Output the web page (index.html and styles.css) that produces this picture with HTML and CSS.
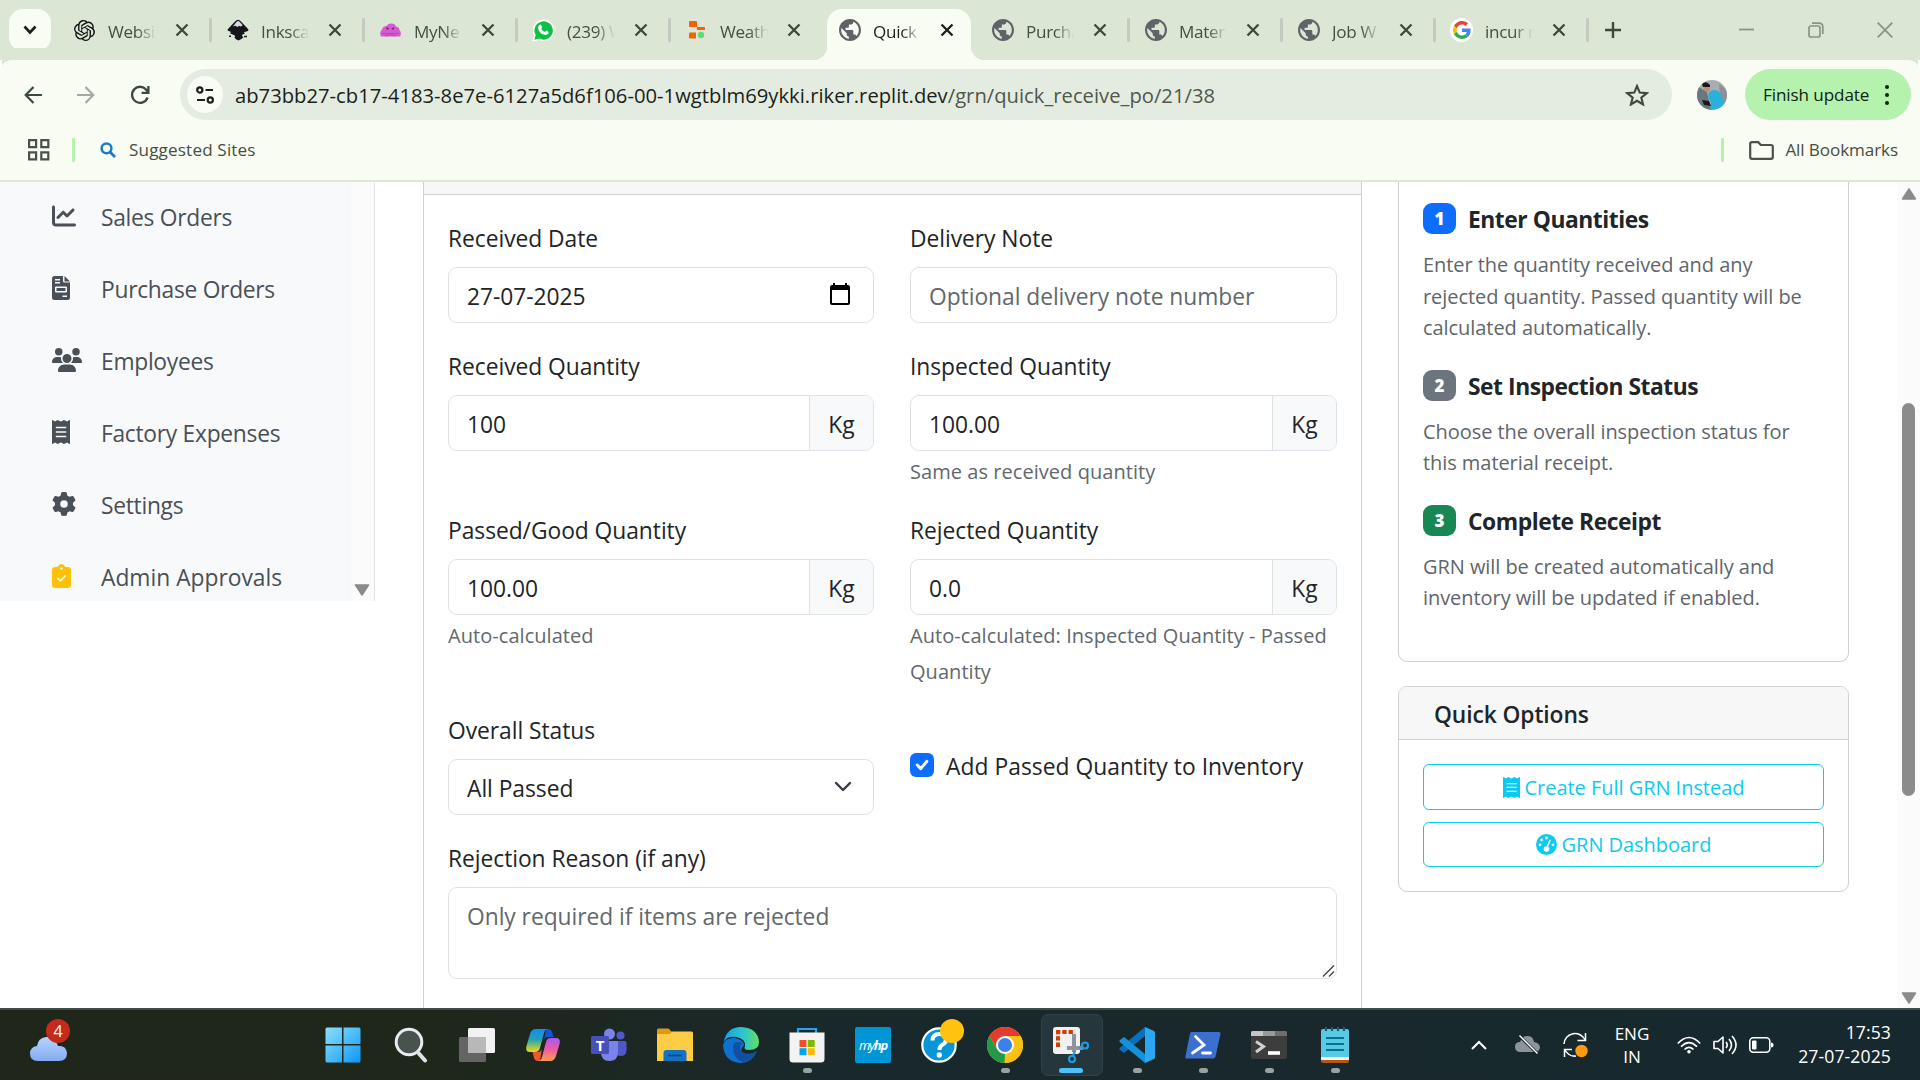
FILE: index.html
```html
<!DOCTYPE html>
<html lang="en">
<head>
<meta charset="utf-8">
<title>Quick Receive</title>
<link rel="stylesheet" href="styles.css">
</head>
<body>
<svg class="defs" width="0" height="0" aria-hidden="true">
  <symbol id="x" viewBox="0 0 14 14"><path d="M1.500 1.500l11 11M12.500 1.500l-11 11" stroke="currentColor" stroke-width="2.300" fill="none"/></symbol>
  <symbol id="globe" viewBox="2 2 20 20"><path fill="#5f6368" d="M12 2C6.480 2 2 6.480 2 12s4.480 10 10 10 10-4.480 10-10S17.520 2 12 2zm-1 17.930c-3.950-.49-7-3.850-7-7.930 0-.62.08-1.210.21-1.790L9 15v1c0 1.100.9 2 2 2v1.930zm6.900-2.540c-.26-.81-1-1.390-1.900-1.390h-1v-3c0-.55-.45-1-1-1H8v-2h2c.55 0 1-.45 1-1V7h2c1.100 0 2-.9 2-2v-.41c2.930 1.190 5 4.060 5 7.410 0 2.080-.8 3.970-2.100 5.390z"/></symbol>
  <symbol id="receipt" viewBox="0 0 18 24"><path fill="currentColor" fill-rule="evenodd" d="M0 .7Q0-.3 1 .3L3 1.600 5 .2Q5.500 0 6 .2L9 1.600 11.500.2Q12 0 12.500.2L15 1.600 17 .3Q18-.3 18 .7V23.300Q18 24.300 17 23.700L15 22.400 12.500 23.800Q12 24 11.500 23.800L9 22.400 6 23.800Q5.500 24 5 23.800L3 22.400 1 23.700Q0 24.300 0 23.300ZM3.800 6.800v1.500h10.500V6.800ZM3.800 11.200v1.500h10.500v-1.500ZM3.800 15.700v1.500h10.500v-1.500Z"/></symbol>
</svg>

<header class="tabstrip">
  <button class="tab-search"><svg width="14" height="10" viewBox="0 0 14 10"><path d="M1.500 1.500L7 7.500l5.500-6" fill="none" stroke="#1b1f18" stroke-width="2.600"/></svg></button>
  <div class="tabs">
    <div class="tab"><span class="fav"><svg width="21" height="21" viewBox="0 0 24 24"><path fill="#111" d="M22.2819 9.8211a5.9847 5.9847 0 0 0-.5157-4.9108 6.0462 6.0462 0 0 0-6.5098-2.9A6.0651 6.0651 0 0 0 4.9807 4.1818a5.9847 5.9847 0 0 0-3.9977 2.9 6.0462 6.0462 0 0 0 .7427 7.0966 5.98 5.98 0 0 0 .511 4.9107 6.051 6.051 0 0 0 6.5146 2.9001A5.9847 5.9847 0 0 0 13.2599 24a6.0557 6.0557 0 0 0 5.7718-4.2058 5.9894 5.9894 0 0 0 3.9977-2.9001 6.0557 6.0557 0 0 0-.7475-7.0729zm-9.022 12.6081a4.4755 4.4755 0 0 1-2.8764-1.0408l.1419-.0804 4.7783-2.7582a.7948.7948 0 0 0 .3927-.6813v-6.7369l2.02 1.1686a.071.071 0 0 1 .038.052v5.5826a4.504 4.504 0 0 1-4.4945 4.4944zm-9.6607-4.1254a4.4708 4.4708 0 0 1-.5346-3.0137l.142.0852 4.783 2.7582a.7712.7712 0 0 0 .7806 0l5.8428-3.3685v2.3324a.0804.0804 0 0 1-.0332.0615L9.74 19.9502a4.4992 4.4992 0 0 1-6.1408-1.6464zM2.3408 7.8956a4.485 4.485 0 0 1 2.3655-1.9728V11.6a.7664.7664 0 0 0 .3879.6765l5.8144 3.3543-2.0201 1.1685a.0757.0757 0 0 1-.071 0l-4.8303-2.7865A4.504 4.504 0 0 1 2.3408 7.872zm16.5963 3.8558L13.1038 8.364 15.1192 7.2a.0757.0757 0 0 1 .071 0l4.8303 2.7913a4.4944 4.4944 0 0 1-.6765 8.1042v-5.6772a.79.79 0 0 0-.407-.667zm2.0107-3.0231l-.142-.0852-4.7735-2.7818a.7759.7759 0 0 0-.7854 0L9.409 9.2297V6.8974a.0662.0662 0 0 1 .0284-.0615l4.8303-2.7866a4.4992 4.4992 0 0 1 6.6802 4.66zM8.3065 12.863l-2.02-1.1638a.0804.0804 0 0 1-.038-.0567V6.0742a4.4992 4.4992 0 0 1 7.3757-3.4537l-.142.0805L8.704 5.459a.7948.7948 0 0 0-.3927.6813zm1.0976-2.3654l2.602-1.4998 2.6069 1.4998v2.9994l-2.5974 1.4997-2.6067-1.4997Z"/></svg></span><span class="tab-title">Websi</span><svg class="close"><use href="#x"/></svg></div>
    <div class="tab"><span class="fav"><svg width="22" height="22" viewBox="0 0 22 22"><path d="M11 .8Q12.500.8 14 2.500L21 10q1.200 1.600-.8 2.300l-3.400.9q1.400.8.6 1.600l-2.200.9q-.6 2 1.300 2.500-1 1.500-5 3.300-3-1-4.200-3.200 1.500-.8 0-2L3.400 14.500q-.7-1 .8-1.600L1.600 12Q-.1 11.300 1 10L8 2.500Q9.500.8 11 .8Z" fill="#15161c"/><path d="M11 2q1 0 2 1.200l2.700 3-2.200 1.300-1.500-.8-1.300 1.300L8.300 6.800 6 7.500l3-4Q10 2 11 2Z" fill="#d9dbe6"/><path d="M17 17.500h3M2 17.200h2" stroke="#222" stroke-width="1.500"/></svg></span><span class="tab-title">Inksca</span><svg class="close"><use href="#x"/></svg></div>
    <div class="tab"><span class="fav"><svg width="21" height="14" viewBox="0 0 21 14"><path d="M1 13.500Q-1 9 2 6.500 3 3 6.500 3 8 0 11.500.5 15 .5 16 3.500q3.500.5 3.500 3.500 2.500 3 .5 6.500Z" fill="#d65bd0"/><path d="M2 10.500h17M5 13q5-3 11 0" stroke="#bf3fc0" stroke-width="1" fill="none"/><path d="M6.500 5l2 1.200M14 5l-2 1.200" stroke="#702070" stroke-width="1.500"/></svg></span><span class="tab-title">MyNe</span><svg class="close"><use href="#x"/></svg></div>
    <div class="tab"><span class="fav"><svg width="23" height="23" viewBox="0 0 23 23"><path d="M.5 22.500l1.700-6A10.800 10.800 0 1 1 6.800 21Z" fill="#fff"/><path d="M2.400 20.800l1.300-4.700a9.200 9.200 0 1 1 3.500 3.400Z" fill="#0cc143"/><path d="M7.500 6q1.200-1 1.900.5l.8 1.900-.9 1.300q1.200 2.300 3.600 3.300l1.300-1.400 2.300 1.200q.7 3-2.900 3.100-6.500-.7-7.600-7.200 0-1.700 1.500-2.700Z" fill="#fff"/></svg></span><span class="tab-title">(239) W</span><svg class="close"><use href="#x"/></svg></div>
    <div class="tab no-sep"><span class="fav"><svg width="16" height="18" viewBox="0 0 16 18"><path fill="#f26207" d="M1 0h6q1 0 1 1v5H1Q0 6 0 5V1Q0 0 1 0ZM8 6h7q1 0 1 1v2H8ZM1 11.500h6V17.500H1q-1 0-1-1v-4q0-1 1-1Z"/><circle cx="12" cy="14" r="3.200" fill="#5fdc78"/></svg></span><span class="tab-title">Weath</span><svg class="close"><use href="#x"/></svg></div>
    <div class="tab active"><span class="fav"><svg width="22" height="22"><use href="#globe"/></svg></span><span class="tab-title">Quick</span><svg class="close"><use href="#x"/></svg></div>
    <div class="tab"><span class="fav"><svg width="22" height="22"><use href="#globe"/></svg></span><span class="tab-title">Purcha</span><svg class="close"><use href="#x"/></svg></div>
    <div class="tab"><span class="fav"><svg width="22" height="22"><use href="#globe"/></svg></span><span class="tab-title">Mater</span><svg class="close"><use href="#x"/></svg></div>
    <div class="tab"><span class="fav"><svg width="22" height="22"><use href="#globe"/></svg></span><span class="tab-title">Job W</span><svg class="close"><use href="#x"/></svg></div>
    <div class="tab"><span class="fav google"><svg width="18" height="18" viewBox="0 0 48 48"><path fill="#EA4335" d="M24 9.500c3.540 0 6.710 1.220 9.210 3.600l6.850-6.850C35.900 2.380 30.470 0 24 0 14.620 0 6.510 5.380 2.560 13.220l7.980 6.190C12.430 13.720 17.740 9.500 24 9.500z"/><path fill="#4285F4" d="M46.980 24.550c0-1.570-.15-3.090-.38-4.550H24v9.020h12.940c-.58 2.960-2.260 5.480-4.780 7.180l7.730 6c4.510-4.180 7.090-10.360 7.090-17.650z"/><path fill="#FBBC05" d="M10.530 28.590c-.48-1.450-.76-2.990-.76-4.590s.27-3.140.76-4.590l-7.980-6.190C.92 16.460 0 20.120 0 24c0 3.880.92 7.540 2.560 10.780l7.970-6.190z"/><path fill="#34A853" d="M24 48c6.480 0 11.930-2.130 15.890-5.810l-7.730-6c-2.150 1.450-4.920 2.300-8.160 2.300-6.260 0-11.570-4.220-13.470-9.910l-7.980 6.190C6.510 42.620 14.620 48 24 48z"/></svg></span><span class="tab-title">incur m</span><svg class="close"><use href="#x"/></svg></div>
  </div>
  <button class="new-tab"><svg width="16" height="16" viewBox="0 0 16 16"><path d="M8 0v16M0 8h16" stroke="#3c4a38" stroke-width="2.400"/></svg></button>
  <div class="window-controls">
    <svg width="16" height="16" viewBox="0 0 16 16"><path d="M0 7.500h15" stroke="#8b9485" stroke-width="1.800"/></svg>
    <svg width="16" height="16" viewBox="0 0 16 16" fill="none" stroke="#8b9485" stroke-width="1.700"><rect x="1" y="4" width="11" height="11" rx="2"/><path d="M4 1.200h7q3.800 0 3.800 3.800v7"/></svg>
    <svg width="16" height="16" viewBox="0 0 16 16"><path d="M.7.7l14.600 14.600M15.300.7L.7 15.300" stroke="#8b9485" stroke-width="1.800"/></svg>
  </div>
</header>

<div class="toolbar">
  <nav class="nav-buttons">
    <svg width="18" height="18" viewBox="0 0 18 18" fill="none" stroke="#3c4a38" stroke-width="2.200"><path d="M9.500 1L1.700 9l7.800 8M1.700 9H18"/></svg>
    <svg width="18" height="18" viewBox="0 0 18 18" fill="none" stroke="#a3aba0" stroke-width="2.200"><path d="M8.500 1l7.800 8-7.800 8M16.300 9H0"/></svg>
    <svg width="20" height="20" viewBox="0 0 20 20" fill="none" stroke="#3c4a38" stroke-width="2.300"><path d="M17.600 12.500A8 8 0 1 1 16.500 5l1.500 2M18.400 1v6.800H11.600"/></svg>
  </nav>
  <div class="omnibox">
    <span class="site-info"><svg width="18" height="18" viewBox="0 0 18 18" fill="none" stroke="#1b1f18" stroke-width="2.200"><circle cx="3.800" cy="4" r="2.600"/><path d="M9.500 4H17M1 14h8"/><circle cx="14.300" cy="14" r="2.600"/></svg></span>
    <span class="url"><span class="host">ab73bb27-cb17-4183-8e7e-6127a5d6f106-00-1wgtblm69ykki.riker.replit.dev</span><span class="path">/grn/quick_receive_po/21/38</span></span>
    <svg class="star" width="24" height="22" viewBox="0 0 24 22"><path d="M12 2l2.700 6.600 7.100.5-5.500 4.500 1.800 6.900L12 16.800l-6.100 3.700 1.800-6.900L2.200 9.100l7.100-.5Z" fill="none" stroke="#3f4a3c" stroke-width="2.100"/></svg>
  </div>
  <svg class="avatar" width="30" height="30" viewBox="0 0 30 30"><defs><clipPath id="av"><circle cx="15" cy="15" r="15"/></clipPath></defs><g clip-path="url(#av)"><path fill="#a9adb2" d="M0 0h30v30H0z"/><path fill="#6d757d" d="M0 6l10 6 4 18H0z"/><path fill="#8d9196" d="M22 4l8 6v20h-6z"/><path fill="#2ab1d9" d="M12 12q7-5 12 2l4 11-7 5h-8l1-8q-4-4-2-10Z"/><path fill="#c58a68" d="M6 5l6-1 1 6-3 2-3-3z"/><path fill="#17191d" d="M5 4q4-4 8 1v2L6 7zM5 20l7 1 2 5-7-1z"/></g></svg>
  <button class="update"><span>Finish update</span><i></i></button>
</div>

<div class="bookmarks">
  <svg class="apps" width="22" height="22" viewBox="0 0 22 22" fill="none" stroke="#4a5146" stroke-width="2.200"><path d="M1.100 1.100h7v7h-7zM13.300 1.100h7v7h-7zM1.100 13.300h7v7h-7zM13.300 13.300h7v7h-7z"/></svg>
  <i class="bar"></i>
  <svg class="lens" width="16" height="16" viewBox="0 0 16 16" fill="none" stroke="#1f7bc9"><circle cx="6.500" cy="6.300" r="4.900" stroke-width="2.500"/><path d="M10 10l5 5" stroke-width="2.800"/></svg>
  <span class="suggested">Suggested Sites</span>
  <i class="bar right"></i>
  <svg class="folder" width="25" height="19" viewBox="0 0 25 19"><path d="M1.200 3q0-1.800 1.800-1.800h6.300l2.500 2.800H22q1.800 0 1.800 1.800V16q0 1.800-1.800 1.800H3Q1.200 17.800 1.200 16Z" fill="none" stroke="#4a5146" stroke-width="2.200"/></svg>
  <span class="all">All Bookmarks</span>
</div>

<div class="viewport">
  <aside class="sidebar">
    <ul>
      <li><svg width="24" height="24" viewBox="0 0 512 512"><path fill="currentColor" d="M64 64c0-17.700-14.300-32-32-32S0 46.300 0 64V400c0 44.200 35.800 80 80 80H480c17.700 0 32-14.300 32-32s-14.300-32-32-32H80c-8.800 0-16-7.200-16-16V64zm406.600 86.600c12.500-12.500 12.500-32.800 0-45.300s-32.800-12.500-45.300 0L320 210.700l-57.400-57.400c-12.500-12.500-32.800-12.500-45.300 0l-112 112c-12.500 12.500-12.500 32.800 0 45.300s32.800 12.500 45.300 0L240 221.300l57.400 57.400c12.500 12.500 32.800 12.500 45.300 0l128-128z"/></svg><span>Sales Orders</span></li>
      <li><svg width="18" height="24" viewBox="0 0 18 24"><path fill="currentColor" fill-rule="evenodd" d="M2.500 0H11v5q0 1.500 1.500 1.500H18v15q0 2.500-2.500 2.500h-13Q0 24 0 21.500v-19Q0 0 2.500 0ZM3 3v1.500h5V3ZM3 6v1.500h5V6ZM4 10.500q-1 0-1 1v4q0 1 1 1h10q1 0 1-1v-4q0-1-1-1ZM4.500 12h9v3h-9ZM10.500 19.500V21H15v-1.500Z"/><path d="M12.500 0L18 5.500h-5.500z" fill="currentColor"/></svg><span>Purchase Orders</span></li>
      <li><svg width="30" height="24" viewBox="0 0 640 512"><path fill="currentColor" d="M144 0a80 80 0 1 1 0 160A80 80 0 1 1 144 0zM512 0a80 80 0 1 1 0 160A80 80 0 1 1 512 0zM0 298.700C0 239.800 47.800 192 106.700 192h42.700c15.900 0 31 3.500 44.600 9.700c-1.300 7.200-1.900 14.700-1.900 22.300c0 38.200 16.800 72.500 43.300 96c-.2 0-.4 0-.7 0H21.300C9.600 320 0 310.400 0 298.700zM405.300 320c-.2 0-.4 0-.7 0c26.600-23.500 43.300-57.800 43.300-96c0-7.600-.7-15-1.900-22.300c13.600-6.300 28.700-9.700 44.600-9.700h42.700C592.200 192 640 239.800 640 298.700c0 11.800-9.600 21.300-21.300 21.300H405.300zM224 224a96 96 0 1 1 192 0 96 96 0 1 1 -192 0zM128 485.300C128 411.700 187.700 352 261.300 352H378.700C452.300 352 512 411.700 512 485.300c0 14.700-11.900 26.700-26.700 26.700H154.700c-14.700 0-26.700-11.900-26.700-26.700z"/></svg><span>Employees</span></li>
      <li><svg width="18" height="24"><use href="#receipt"/></svg><span>Factory Expenses</span></li>
      <li><svg width="24" height="24" viewBox="0 0 512 512"><path fill="currentColor" d="M495.900 166.600c3.200 8.700 .5 18.400-6.400 24.600l-43.300 39.400c1.100 8.300 1.700 16.800 1.700 25.400s-.6 17.100-1.700 25.400l43.300 39.400c6.900 6.200 9.600 15.900 6.400 24.600c-4.400 11.900-9.700 23.300-15.800 34.300l-4.700 8.100c-6.600 11-14 21.400-22.100 31.200c-5.900 7.200-15.700 9.600-24.500 6.800l-55.700-17.700c-13.400 10.300-28.200 18.900-44 25.400l-12.500 57.100c-2 9.100-9 16.300-18.200 17.800c-13.800 2.300-28 3.500-42.500 3.500s-28.700-1.200-42.500-3.500c-9.200-1.500-16.200-8.700-18.200-17.800l-12.500-57.100c-15.800-6.500-30.600-15.100-44-25.400L83.100 425.900c-8.800 2.800-18.600 .3-24.500-6.800c-8.100-9.800-15.500-20.200-22.100-31.200l-4.700-8.100c-6.100-11-11.400-22.400-15.800-34.300c-3.200-8.700-.5-18.400 6.400-24.600l43.300-39.400C64.600 273.100 64 264.600 64 256s.6-17.100 1.700-25.400L22.400 191.200c-6.900-6.200-9.600-15.900-6.400-24.600c4.400-11.900 9.700-23.300 15.800-34.300l4.700-8.100c6.600-11 14-21.400 22.100-31.200c5.900-7.200 15.700-9.600 24.500-6.800l55.700 17.700c13.400-10.300 28.200-18.900 44-25.400l12.500-57.100c2-9.100 9-16.300 18.200-17.800C227.300 1.200 241.500 0 256 0s28.700 1.200 42.500 3.500c9.200 1.500 16.200 8.700 18.200 17.800l12.500 57.100c15.800 6.500 30.600 15.100 44 25.400l55.700-17.700c8.800-2.800 18.600-.3 24.500 6.800c8.100 9.800 15.500 20.200 22.100 31.200l4.700 8.100c6.100 11 11.400 22.400 15.800 34.300zM256 336a80 80 0 1 0 0-160 80 80 0 1 0 0 160z"/></svg><span>Settings</span></li>
      <li><svg width="19" height="24" viewBox="0 0 19 24"><path fill="#ffc107" d="M3 3h2.500Q7 0 9.500 0T13.500 3H16q3 0 3 3v15q0 3-3 3H3q-3 0-3-3V6q0-3 3-3Z"/><circle cx="9.500" cy="4.600" r="1.200" fill="#f8f9fb"/><path d="M5.500 14l3 2.800 5-5.300" stroke="#f8f9fb" stroke-width="1.700" fill="none"/></svg><span class="spread">Admin Approvals</span></li>
    </ul>
    <div class="side-scroll"><svg width="16" height="12" viewBox="0 0 16 12"><path d="M1.500 1h13L8 11Z" fill="#8b8b8b" stroke="#8b8b8b" stroke-width="1.500" stroke-linejoin="round"/></svg></div>
  </aside>

  <main>
    <section class="card form-card">
      <div class="card-head"></div>
      <form class="fields">
        <div class="group"><label>Received Date</label>
          <div class="control"><span>27-07-2025</span><svg class="cal" width="20" height="22" viewBox="0 0 20 22"><path fill-rule="evenodd" d="M3 0h2v2h10V0h2v2h1q2 0 2 2v16q0 2-2 2H2q-2 0-2-2V4q0-2 2-2h1ZM2 7v13h16V7Z"/></svg></div></div>
        <div class="group"><label>Delivery Note</label>
          <div class="control"><input placeholder="Optional delivery note number"></div></div>
        <div class="group"><label>Received Quantity</label>
          <div class="control"><input value="100"><span class="unit">Kg</span></div></div>
        <div class="group"><label>Inspected Quantity</label>
          <div class="control"><input value="100.00"><span class="unit">Kg</span></div>
          <small>Same as received quantity</small></div>
        <div class="group"><label>Passed/Good Quantity</label>
          <div class="control"><input value="100.00"><span class="unit">Kg</span></div>
          <small>Auto-calculated</small></div>
        <div class="group"><label>Rejected Quantity</label>
          <div class="control"><input value="0.0"><span class="unit">Kg</span></div>
          <small>Auto-calculated: Inspected Quantity - Passed Quantity</small></div>
        <div class="group"><label>Overall Status</label>
          <div class="control"><span>All Passed</span><svg class="caret" width="18" height="12" viewBox="0 0 18 12"><path d="M2 2l7 7 7-7" fill="none" stroke="#343a40" stroke-width="2.400" stroke-linecap="round" stroke-linejoin="round"/></svg></div></div>
        <div class="group check"><svg width="24" height="24" viewBox="0 0 24 24"><rect width="24" height="24" rx="6" fill="#0d6efd"/><path d="M7.200 12l3.600 3.600 6-7.200" fill="none" stroke="#fff" stroke-width="3" stroke-linecap="round" stroke-linejoin="round"/></svg><span>Add Passed Quantity to Inventory</span></div>
        <div class="group wide"><label>Rejection Reason (if any)</label>
          <div class="control area"><span>Only required if items are rejected</span><svg class="grip" width="13" height="12" viewBox="0 0 13 12"><path d="M1 11.500L12 .5M7 11.500l5-5" stroke="#444" stroke-width="1.400"/></svg></div></div>
      </form>
    </section>

    <div class="side-cards">
      <section class="card help">
        <div class="step"><h6><b class="badge blue">1</b><span>Enter Quantities</span></h6>
        <p>Enter the quantity received and any<br>rejected quantity. Passed quantity will be<br>calculated automatically.</p></div>
        <div class="step"><h6><b class="badge gray">2</b><span>Set Inspection Status</span></h6>
        <p>Choose the overall inspection status for<br>this material receipt.</p></div>
        <div class="step"><h6><b class="badge green">3</b><span>Complete Receipt</span></h6>
        <p>GRN will be created automatically and<br>inventory will be updated if enabled.</p></div>
      </section>
      <section class="card options">
        <h5>Quick Options</h5>
        <div class="actions">
          <a class="btn"><svg width="17" height="21" viewBox="0 0 18 24" preserveAspectRatio="none"><use href="#receipt"/></svg><span>Create Full GRN Instead</span></a>
          <a class="btn second"><svg width="21" height="21" viewBox="0 0 21 21"><circle cx="10.500" cy="10.500" r="10.500" fill="#0dcaf0"/><g fill="#fff"><circle cx="5.600" cy="6" r="1.400"/><circle cx="10.500" cy="4" r="1.400"/><circle cx="4" cy="10.800" r="1.400"/><circle cx="17" cy="10.800" r="1.400"/><circle cx="10.500" cy="15" r="2.800"/></g><path d="M10.500 14.500L14 6.500" stroke="#fff" stroke-width="1.700" stroke-linecap="round"/></svg><span>GRN Dashboard</span></a>
        </div>
      </section>
    </div>
  </main>

  <div class="page-scroll">
    <svg width="16" height="12" viewBox="0 0 16 12"><path d="M1.500 11h13L8 1Z" fill="#8b8b8b" stroke="#8b8b8b" stroke-width="1.500" stroke-linejoin="round"/></svg>
    <i></i>
    <svg width="16" height="12" viewBox="0 0 16 12"><path d="M1.500 1h13L8 11Z" fill="#8b8b8b" stroke="#8b8b8b" stroke-width="1.500" stroke-linejoin="round"/></svg>
  </div>
</div>

<footer class="taskbar">
  <div class="weather">
    <svg width="37" height="28" viewBox="0 0 37 28"><defs><linearGradient id="cl" x2="0" y2="1"><stop stop-color="#b6d5fb"/><stop offset="1" stop-color="#84abf0"/></linearGradient></defs><path d="M8 28Q0 28 0 20.500 0 14 7 13 8 5 16 4q9-1 12 9 8-1 9 7 0 8-8 8Z" fill="url(#cl)"/></svg>
    <b>4</b>
  </div>
  <div class="apps-row">
    <div class="app start"><svg width="36" height="36" viewBox="0 0 36 36"><defs><linearGradient id="wi" x2="1" y2="1"><stop stop-color="#8be0fc"/><stop offset="1" stop-color="#0c98f8"/></linearGradient></defs><path fill="url(#wi)" d="M2 .5h15v16.500H.5V2Q.5.5 2 .5ZM18.500.5H34q1.500 0 1.500 1.500v15h-17ZM.5 18.500H17v17H2Q.5 35.500.5 34ZM18.500 18.500h17V34q0 1.500-1.500 1.500H18.500Z"/></svg></div>
    <div class="app"><svg width="34" height="36" viewBox="0 0 34 36"><circle cx="15" cy="15" r="12.800" fill="#48524f" stroke="#e8ebef" stroke-width="3"/><path d="M24 25.500l7 8" stroke="#dfe3e7" stroke-width="4" stroke-linecap="round"/></svg></div>
    <div class="app"><svg width="36" height="36" viewBox="0 0 36 36"><rect x="0" y="10" width="27" height="25" rx="1.500" fill="#646464"/><rect x="9" y="1" width="27" height="25" rx="1.500" fill="#f2f2f2"/><path d="M9 10h18v16H10.500Q9 26 9 24.500Z" fill="#b8b8b8"/></svg></div>
    <div class="app"><svg width="34" height="32" viewBox="0 0 34 32"><defs><linearGradient id="c1" x2="0" y2="1"><stop stop-color="#128df0"/><stop offset=".45" stop-color="#22a0b8"/><stop offset="1" stop-color="#f0dc12"/></linearGradient><linearGradient id="c2" x2="0" y2="1"><stop stop-color="#a55bf0"/><stop offset=".5" stop-color="#ef5aa0"/><stop offset="1" stop-color="#ffa34c"/></linearGradient></defs><path d="M20 0h2q3 0 4 3l1.500 5H22q-3 0-4 3Z" fill="#1652d8"/><path d="M14 32h-2q-3 0-4-3l-1.500-6H12q3 0 4-3Z" fill="#f2552f"/><path d="M10 0h12q-3 0-4 4l-4 15q-1 4-5 4H4Q-1 23 .5 17L4 5Q5.500 0 10 0Z" fill="url(#c1)"/><path d="M24 32H12q3 0 4-4l4-15q1-4 5-4h5q5 0 3.500 6L30 27q-1.500 5-6 5Z" fill="url(#c2)"/></svg></div>
    <div class="app"><svg width="36" height="34" viewBox="0 0 36 34"><circle cx="18.500" cy="6" r="5.500" fill="#7b83eb"/><circle cx="29.500" cy="7.500" r="4" fill="#5059c9"/><path d="M25 13h8.500q2 0 2 2v7q0 6-6 6-4.500 0-4.500-5Z" fill="#4f58c8"/><path d="M10 13h17v11q0 9-8.500 9T10 24Z" fill="#7b83eb"/><rect y="8" width="18" height="18" rx="1.500" fill="#4750b8"/><text x="9" y="22.500" fill="#fff" font-size="15" font-weight="700" text-anchor="middle">T</text></svg></div>
    <div class="app"><svg width="36" height="34" viewBox="0 0 36 34"><path d="M0 2Q0 .5 1.500.5h10L15 4v5H0Z" fill="#e09a10"/><path d="M0 6h13l2-2.500h19.500Q36 3.500 36 5v28H0Z" fill="#ffcd45"/><path d="M6.500 33V25q0-3 3-3h17q3 0 3 3v8Z" fill="#1372c4"/><path d="M11 27.500h14" stroke="#0b4b8a" stroke-width="1.800"/></svg></div>
    <div class="app"><svg width="36" height="36" viewBox="0 0 36 36"><defs><linearGradient id="e1" x2="1"><stop stop-color="#1b9de2"/><stop offset=".55" stop-color="#2cc5cf"/><stop offset="1" stop-color="#63e064"/></linearGradient></defs><path d="M0 18Q2 10 12 11q9 2 9 7-6 7 2 9 6 1 11-3-5 12-16 12Q1 35 0 18Z" fill="#0f70cf"/><path d="M10 20q0 12 10 15 9 0 14-11-6 4-13 2-7-4-2-10-8-3-9 4Z" fill="#124fa0"/><path d="M.5 15Q4 0 18 0q17 1 18 15 0 8-10 8-6 0-4-4 1-7-9-9Q4 9 .5 15Z" fill="url(#e1)"/></svg></div>
    <div class="app"><svg width="36" height="36" viewBox="0 0 36 36"><path d="M9 7V2h18v5" fill="none" stroke="#25a5ea" stroke-width="2.200"/><path d="M.5 5.500h35V32q0 3.500-3.500 3.500H4Q.5 35.500.5 32Z" fill="#f3f3f3"/><path fill="#f25022" d="M10.500 13h7v7h-7z"/><path fill="#7fba00" d="M18.700 13h7v7h-7z"/><path fill="#00a4ef" d="M10.500 21.200h7v7h-7z"/><path fill="#ffb900" d="M18.700 21.200h7v7h-7z"/></svg><i></i></div>
    <div class="app"><span class="myhp">my<b>hp</b></span></div>
    <div class="app help-app"><svg width="36" height="36" viewBox="0 0 36 36"><circle cx="18" cy="18" r="16.700" fill="#0a96d6" stroke="#fff" stroke-width="2.200"/><path d="M11.500 13.500q0-6.500 7-6.500 6.500 0 6.500 5.500 0 3.500-4 5.500-2.500 1.300-2.500 5" fill="none" stroke="#fff" stroke-width="4"/><circle cx="18.300" cy="28" r="2.700" fill="#fff"/></svg><em></em></div>
    <div class="app"><svg width="36" height="36" viewBox="0 0 36 36"><circle cx="18" cy="18" r="18" fill="#fbc016"/><path d="M2.400 9A18 18 0 0 1 33.600 9H18L10.500 22.500Z" fill="#e33b2e"/><path d="M2.400 9L10.300 22.500 18 27 17.500 36A18 18 0 0 1 2.400 9Z" fill="#229a49"/><path d="M18 36l8-13.500L33.600 9A18 18 0 0 1 18 36Z" fill="#fbc016"/><circle cx="18" cy="18" r="9" fill="#fff"/><circle cx="18" cy="18" r="7" fill="#3c7ff0"/></svg><i></i></div>
    <div class="app current"><svg width="36" height="36" viewBox="0 0 36 36"><path d="M3 0h21q3 0 3 3v21q0 3-3 3H3q-3 0-3-3V3Q0 0 3 0Z" fill="#f1f1f1"/><path d="M5 3v17M3 5h18" stroke="#d83b01" stroke-width="4" stroke-dasharray="4.300 2"/><path d="M21 7v18M14 21h16" stroke="#8d959c" stroke-width="4"/><circle cx="19" cy="32" r="3" fill="none" stroke="#1d9be0" stroke-width="2.200"/><circle cx="32" cy="18.500" r="3" fill="none" stroke="#1d9be0" stroke-width="2.200"/><path d="M20 29l2-5M29 20l-3 1" stroke="#1d9be0" stroke-width="2.200"/></svg><i></i></div>
    <div class="app"><svg width="36" height="36" viewBox="0 0 36 36"><path d="M26 0v9L5 26 1 23q-1.300-1 0-2.300Z" fill="#0a70bd"/><path d="M26 36v-9L5 10 1 13q-1.300 1 0 2.300Z" fill="#1590dc"/><path d="M26 0l9 4q1 .5 1 2v24q0 1.500-1 2l-9 4Z" fill="#2aa6f2"/></svg><i></i></div>
    <div class="app"><svg width="36" height="28" viewBox="0 0 36 28"><path d="M6.500 1H34q1.800 0 1.500 1.800l-5 23Q30 27.500 28 27.500H1.500Q0 27.500.3 26L5 2.500Q5.300 1 6.500 1Z" fill="#3b6fd0"/><path d="M10.500 5.500l8.500 8.500L7.500 22M17.500 22h8" fill="none" stroke="#fff" stroke-width="2.800" stroke-linecap="round"/></svg><i></i></div>
    <div class="app"><svg width="36" height="28" viewBox="0 0 36 28"><path d="M1.500 0h33Q36 0 36 1.500V26q0 2-2 2H2q-2 0-2-2V1.500Q0 0 1.500 0Z" fill="#3d3d3d"/><path d="M1.500 0H12v5H0V1.500Q0 0 1.500 0Z" fill="#c6c6c6"/><path d="M12 0h12v5H12Z" fill="#9a9a9a"/><path d="M24 0h10.500Q36 0 36 1.500V5H24Z" fill="#6e6e6e"/><path d="M5 10.500l7.500 5L5 21" fill="none" stroke="#d0d0d0" stroke-width="3"/><path d="M17 22h12" stroke="#fff" stroke-width="3.600"/></svg><i></i></div>
    <div class="app"><svg width="28" height="36" viewBox="0 0 28 36"><path d="M0 31h28v3q0 2-2 2H2q-2 0-2-2Z" fill="#b4570f"/><path d="M0 27h28v6H0Z" fill="#f2f2f2"/><path d="M2 2h24q2 0 2 2v26H0V4q0-2 2-2Z" fill="#58cbe4"/><path d="M5 0v4M11 0v4M17 0v4M23 0v4" stroke="#0c5f80" stroke-width="2.200"/><path d="M5 11h18M5 17h18M5 23h18" stroke="#0b7096" stroke-width="1.900"/></svg><i></i></div>
  </div>
  <div class="tray">
    <svg class="up" width="16" height="10" viewBox="0 0 16 10"><path d="M1 9l7-7 7 7" fill="none" stroke="#fff" stroke-width="2"/></svg>
    <svg class="cloud-off" width="25" height="20" viewBox="0 0 25 20"><path d="M4 17q-4-1-4-5 0-5 5-5Q8 0 13 1q5 0 6 6 6 1 6 6-1 4-5 4Z" fill="#8b9498"/><path d="M4.500 1l18 17.500" stroke="#17282c" stroke-width="3"/><path d="M4.500.5l18 18" stroke="#fff" stroke-width="1.400"/></svg>
    <svg class="sync" width="25" height="26" viewBox="0 0 25 26"><path d="M1 12A11 11 0 0 1 22 8M22.500 1v7.500h-8M9 17.500H1.500V25M2 18q4 7 11 6" fill="none" stroke="#fff" stroke-width="1.500"/><circle cx="18.500" cy="19" r="6.200" fill="#ff9a0c"/></svg>
    <div class="lang"><span>ENG</span><span>IN</span></div>
    <svg class="wifi" width="24" height="18" viewBox="0 0 24 18" fill="none" stroke="#fff" stroke-width="1.700"><path d="M.8 7.500Q12-4.500 23.200 7.500M4 10.700q8-8 16 0M7.500 13.500q4.500-4.200 9 0"/><circle cx="12" cy="15.800" r="1.800" fill="#fff" stroke="none"/></svg>
    <svg class="vol" width="25" height="20" viewBox="0 0 25 20" fill="none" stroke="#fff" stroke-width="1.600"><path d="M1 6.500h4L10 2v16l-5-4.500H1Z" stroke-linejoin="round"/><path d="M13 7q2.500 3 0 6M16 4q5 6 0 12M19 1q8 9 0 18"/></svg>
    <svg class="batt" width="25" height="16" viewBox="0 0 25 16"><rect x=".8" y=".8" width="20" height="14.400" rx="3.500" fill="none" stroke="#fff" stroke-width="1.600"/><rect x="3" y="3.500" width="4.500" height="9" rx="1" fill="#fff"/><path d="M22 5.500q2.500 0 2.500 2.500T22 10.500Z" fill="#fff"/></svg>
    <div class="clock"><span>17:53</span><span>27-07-2025</span></div>
  </div>
</footer>
</body>
</html>
```
FILE: styles.css
```css
* { box-sizing: border-box; }
body { margin: 0; width: 1920px; height: 1080px; overflow: hidden; display: flex; flex-direction: column; background: #fff; color: #212529; font-family: "Open Sans", "Noto Sans", sans-serif; font-size: 22.8px; letter-spacing: -0.04px; }
svg { display: block; flex: none; }
.defs { position: absolute; }
button { border: 0; padding: 0; background: none; font: inherit; letter-spacing: inherit; }
ul, h5, h6, p { margin: 0; padding: 0; list-style: none; }

/* tab strip */
.tabstrip { height: 60px; flex: none; display: flex; align-items: center; padding-left: 9px; background: #dbe6d5; }
.tab-search { width: 42px; height: 42px; border-radius: 14px; background: #f8fcf2; display: grid; place-items: center; margin-right: 7px; }
.tabs { display: flex; align-self: stretch; }
.tab { width: 153px; display: flex; align-items: center; padding-left: 15px; position: relative; color: #45503f; }
.tab::after { content: ""; position: absolute; right: -1px; top: 18px; width: 3px; height: 24px; border-radius: 1px; background: #c4cac0; }
.tab.no-sep::after { display: none; }
.fav { width: 23px; display: flex; justify-content: center; margin-right: 12px; }
.fav.google { height: 24px; align-items: center; border-radius: 50%; background: #fff; }
.tab-title { width: 48px; overflow: hidden; white-space: nowrap; font-size: 17.1px; line-height: 28px; padding-top: 3px; letter-spacing: -0.3px; -webkit-mask-image: linear-gradient(90deg, #000 60%, transparent 100%); mask-image: linear-gradient(90deg, #000 60%, transparent 100%); }
.close { width: 14px; height: 14px; margin-left: 19px; color: #3c4a38; }
.tab.active { color: #1b1f18; z-index: 1; }
.tab.active .close { color: #1b1f18; }
.tab.active > * { position: relative; }
.tab.active::before { content: ""; position: absolute; left: 4px; right: 5px; top: 9px; bottom: 0; border-radius: 15px 15px 0 0; background: #f8fcf2; }
.tab.active::after { left: -10px; right: -9px; top: 46px; width: auto; height: 14px; border-radius: 0; z-index: -1; background: radial-gradient(circle at 0 0, transparent 14px, #f8fcf2 14.5px) left / 14px 14px no-repeat, radial-gradient(circle at 100% 0, transparent 14px, #f8fcf2 14.5px) right / 14px 14px no-repeat; }
.new-tab { margin-left: 17px; }
.window-controls { display: flex; gap: 53px; margin-left: auto; padding-right: 27px; }

/* address row */
.toolbar { height: 60px; flex: none; display: flex; align-items: center; background: #f8fcf2; border-radius: 12px 12px 0 0; box-shadow: 0 -14px 0 -2px #dbe6d5; padding-top: 9px; }
.nav-buttons { display: flex; align-items: center; gap: 35px; width: 180px; padding-left: 24px; }
.omnibox { width: 1492px; height: 51px; border-radius: 26px; background: #e4ebe0; display: flex; align-items: center; padding-left: 7px; }
.site-info { width: 36px; height: 37px; border-radius: 50%; background: #f8fcf2; display: grid; place-items: center; margin-right: 12px; }
.url { font-size: 20.2px; white-space: nowrap; color: #1b1f18; letter-spacing: 0.02px; }
.path { color: #4f584b; }
.star { margin-left: auto; margin-right: 23px; }
.avatar { margin-left: 25px; }
.update { margin-left: 18px; width: 166px; height: 51px; border-radius: 26px; background: #b5f2ae; display: flex; align-items: center; padding-left: 18px; font-size: 17.1px; color: #10240e; white-space: nowrap; letter-spacing: -0.1px; }
.update span { width: 115px; text-align: left; }
.update i { width: 4px; height: 4px; margin-left: 7px; border-radius: 50%; background: #10240e; box-shadow: 0 -8px #10240e, 0 8px #10240e; }

.bookmarks { height: 62px; flex: none; display: flex; align-items: center; background: #f8fcf2; border-bottom: 2px solid #dde7d6; padding: 0 22px 0 28px; font-size: 17.1px; color: #474e43; }
.bookmarks span { margin-top: -2px; }
.suggested { letter-spacing: 0.16px; }
.all { letter-spacing: -0.1px; }
.bar { width: 3px; height: 24px; border-radius: 1px; background: #b5f2ae; margin-left: 22px; }
.lens { margin-left: 25px; margin-right: 13px; }
.bar.right { margin-left: auto; margin-right: 25px; }
.folder { margin-right: 11px; }

/* page */
.viewport { flex: 1; min-height: 0; display: flex; overflow: hidden; }
.sidebar { width: 375px; height: 419px; border-right: 1px solid #dee2e6; display: flex; overflow: hidden; color: #495057; }
.sidebar ul { width: 351px; background: #f8f9fb; }
.sidebar li { height: 72px; display: flex; align-items: center; padding-left: 52px; }
.sidebar li svg { margin-bottom: 5px; }
.sidebar li span { margin-left: auto; width: 250px; margin-top: -2px; letter-spacing: -0.28px; }
.sidebar li .spread { letter-spacing: 0; }
.side-scroll { width: 23px; background: #fbfbfc; display: flex; align-items: flex-end; padding: 0 0 5px 3px; }

main { flex: 1; display: flex; align-items: flex-start; padding-left: 48px; gap: 36px; }
.card { border: 1px solid #cfd0d2; background: #fff; }
.form-card { width: 939px; height: 900px; border-top: 0; border-bottom: 0; }
.card-head { height: 13px; background: #f7f7f7; border-bottom: 1px solid #cfd0d2; }
.fields { padding: 24px; display: grid; grid-template-columns: 426px 427px; column-gap: 36px; row-gap: 24px; }
.group label { display: block; line-height: 40px; margin-bottom: 8px; }
.control { height: 56px; border: 1px solid #dee2e6; border-radius: 9px; display: flex; align-items: center; padding-left: 18px; overflow: hidden; background: #fff; }
.control > span, .control input { padding-top: 2px; }
.control input { flex: 1; min-width: 0; width: 100%; border: 0; padding-left: 0; padding-right: 0; padding-bottom: 0; outline: 0; background: none; font: inherit; color: inherit; letter-spacing: inherit; }
.control input::placeholder { color: #62686d; opacity: 1; }
.unit { width: 64px; height: 100%; border-left: 1px solid #dee2e6; background: #f8f9fb; display: grid; place-items: center; }
.cal { margin-left: auto; margin-right: 23px; margin-bottom: 2px; }
.caret { margin-left: auto; margin-right: 21px; }
.group small { display: block; font-size: 20px; line-height: 36px; padding-top: 3px; margin-bottom: -3px; color: #62686d; letter-spacing: 0.05px; }
.check { display: flex; align-items: flex-start; padding-top: 42px; }
.check span { margin-left: 12px; line-height: 30px; margin-top: -1px; white-space: nowrap; letter-spacing: 0.05px; }
.wide { grid-column: 1 / 3; }
.area { height: 92px; align-items: flex-start; padding-top: 10px; color: #62686d; position: relative; }
.area span { line-height: 34px; }
.grip { position: absolute; right: 1px; bottom: 1px; }

.side-cards { width: 451px; display: flex; flex-direction: column; gap: 24px; }
.help { height: 480px; border-top: 0; border-radius: 0 0 9px 9px; padding: 21px 24px; }
.step { margin-bottom: 26px; }
.step h6 { display: flex; height: 31px; font-size: 22.8px; font-weight: 700; letter-spacing: -0.45px; }
.badge { width: 33px; height: 31px; border-radius: 9px; color: #fff; font-size: 17px; line-height: 31px; text-align: center; margin-right: 12px; letter-spacing: 0; }
.blue { background: #0d6efd; }
.gray { background: #6c757d; }
.green { background: #198754; }
.step h6 span { line-height: 34px; white-space: nowrap; }
.step p { margin-top: 15px; font-size: 20px; line-height: 31.5px; color: #5f656b; white-space: nowrap; letter-spacing: -0.06px; }
.options { height: 206px; border-radius: 9px; overflow: hidden; }
.options h5 { height: 53px; border-bottom: 1px solid #cfd0d2; background: #f7f7f7; padding-left: 35px; font-size: 22.8px; font-weight: 600; line-height: 56px; letter-spacing: -0.1px; }
.actions { padding: 24px 24px 0; display: flex; flex-direction: column; gap: 12px; }
.btn { height: 46px; border: 1px solid #0dcaf0; border-radius: 6px; display: flex; align-items: center; justify-content: center; gap: 5px; color: #0dcaf0; font-size: 20px; }
.btn.second { height: 45px; }

.page-scroll { width: 23px; background: #fbfbfc; display: flex; flex-direction: column; align-items: center; padding: 6px 0 4px; }
.page-scroll i { width: 13px; height: 393px; border-radius: 7px; background: #8b8b8b; margin-top: 203px; margin-bottom: auto; }

/* taskbar */
.taskbar { height: 72px; flex: none; border-top: 2px solid #414c4a; background: linear-gradient(90deg, #20261a 0, #1f271a 22%, #19282a 42%, #17282f 100%); display: flex; align-items: center; color: #fff; }
.weather { width: 312px; padding: 3px 0 0 30px; display: flex; position: relative; }
.weather b { position: absolute; left: 46px; top: -11px; width: 24px; height: 24px; border-radius: 50%; background: #c42b1c; font-size: 16px; font-weight: 400; line-height: 24px; text-align: center; }
.apps-row { display: flex; align-self: stretch; }
.app { width: 66px; height: 70px; display: grid; place-items: center; position: relative; padding-bottom: 1px; }
.app.start { padding-right: 4px; }
.app i { position: absolute; left: 29px; top: 58px; width: 9px; height: 5px; border-radius: 3px; background: #9aa1a3; }
.app.current::before { content: ""; position: absolute; left: 3px; top: 4px; width: 60px; height: 60px; border-radius: 7px; background: #26363d; border: 1px solid #32424a; }
.app.current svg { position: relative; }
.app.current i { left: 21px; width: 24px; background: #4cc2ff; }
.myhp { width: 36px; height: 36px; border-radius: 2px; background: #0096d6; display: flex; align-items: center; justify-content: center; font-size: 13px; font-style: italic; letter-spacing: -1.2px; }
.help-app em { position: absolute; right: 8px; top: 9px; width: 24px; height: 24px; border-radius: 50%; background: #ffc20e; }
.tray { margin-left: auto; display: flex; align-items: center; font-size: 17.1px; padding-right: 29px; }
.cloud-off { margin-left: 28px; }
.sync { margin-left: 23px; }
.lang { display: flex; flex-direction: column; align-items: center; line-height: 23px; margin-left: 26px; width: 36px; }
.wifi { margin-left: 27px; }
.vol { margin-left: 12px; }
.batt { margin-left: 11px; }
.clock { display: flex; flex-direction: column; align-items: flex-end; line-height: 24px; margin: -3px 0 0 22px; width: 95px; white-space: nowrap; font-size: 17.6px; letter-spacing: 0.1px; }
```
